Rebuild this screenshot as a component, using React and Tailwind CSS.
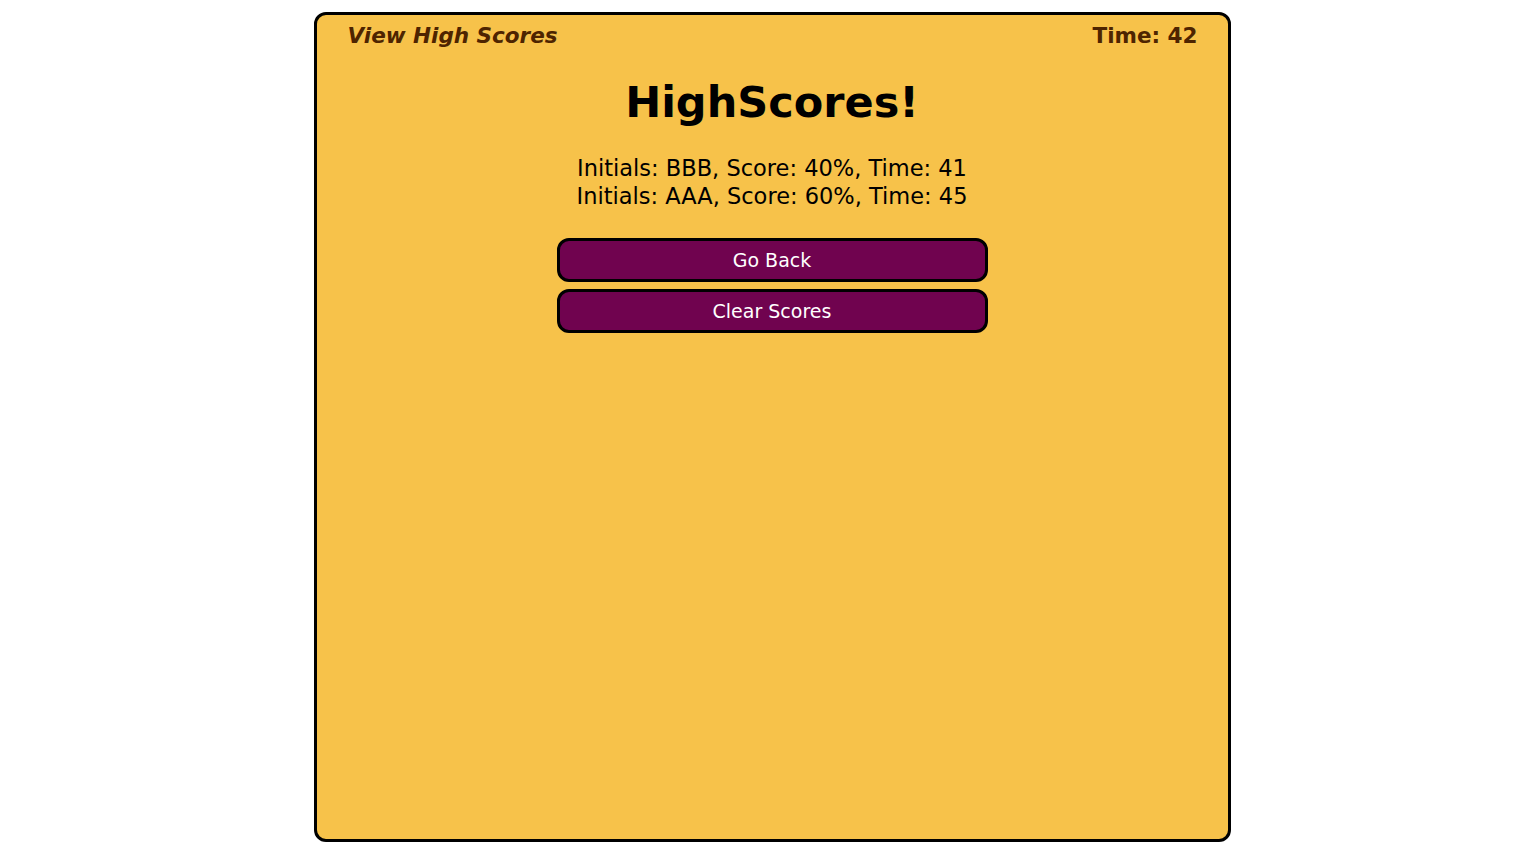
import React from 'react';

const scores = [
  { initials: 'BBB', score: 40, time: 41 },
  { initials: 'AAA', score: 60, time: 45 },
];

const App = () => {
  return (
    <div className="min-h-screen bg-white pt-3 pl-[26px] font-['DejaVu_Sans',sans-serif]">
      <div className="mx-auto w-[917px] h-[830px] bg-[#f7c24a] border-[3px] border-black rounded-[12px] flex flex-col">
        <header className="flex items-center justify-between pl-[31px] pr-[30px] h-[42px] text-[#4e2400] text-[21.5px]">
          <span className="italic font-bold">View High Scores</span>
          <span className="font-semibold">Time: 42</span>
        </header>

        <h1 className="text-center text-[43px] font-bold text-black leading-none mt-[24px]">HighScores!</h1>

        <ul className="mt-[30px] text-center text-[22.5px] leading-[28px] text-black">
          {scores.map((s, i) => (
            <li key={i}>Initials: {s.initials}, Score: {s.score}%, Time: {s.time}</li>
          ))}
        </ul>

        <div className="mt-[28px] flex flex-col items-center gap-[7px]">
          <button className="w-[431px] h-[44px] bg-[#70034f] border-[3px] border-black rounded-[12px] text-white text-[19px]">Go Back</button>
          <button className="w-[431px] h-[44px] bg-[#70034f] border-[3px] border-black rounded-[12px] text-white text-[19px]">Clear Scores</button>
        </div>
      </div>
    </div>
  );
};

export default App;
